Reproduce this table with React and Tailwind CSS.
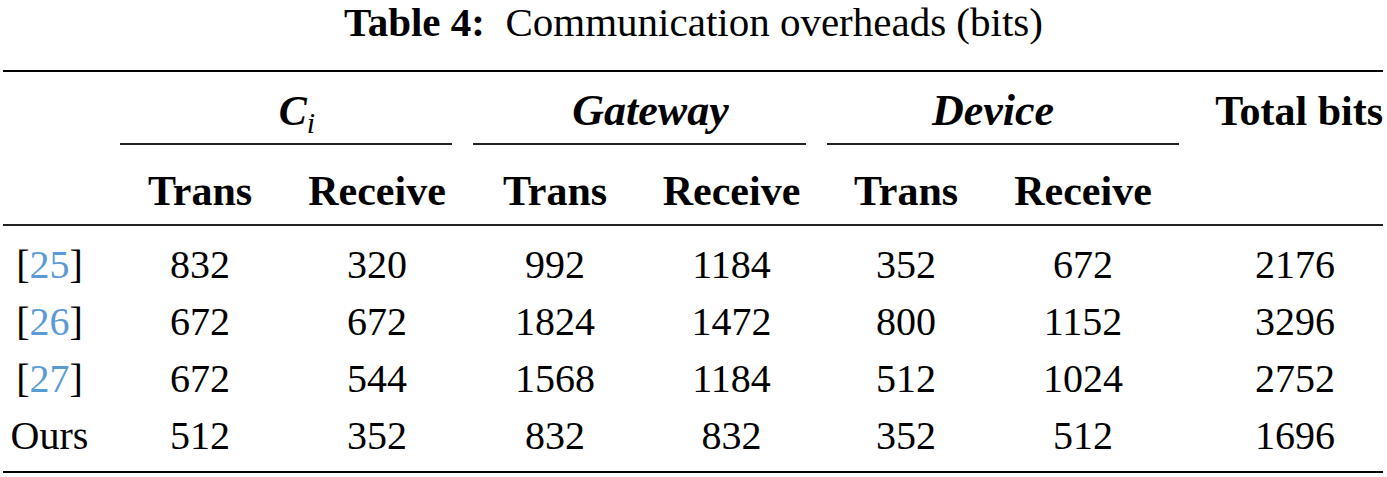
import React from "react";

const cols = "grid grid-cols-[106px_182px_172px_184px_169px_180px_174px_213px]";

const rows = [
  { ref: "25", v: ["832", "320", "992", "1184", "352", "672", "2176"] },
  { ref: "26", v: ["672", "672", "1824", "1472", "800", "1152", "3296"] },
  { ref: "27", v: ["672", "544", "1568", "1184", "512", "1024", "2752"] },
  { ref: null, v: ["512", "352", "832", "832", "352", "512", "1696"] },
];

export default function App() {
  return (
    <div className="w-[1387px] h-[477px] bg-white text-black font-['Liberation_Serif',serif] overflow-hidden">
      {/* caption */}
      <div className="h-[45px] text-center text-[41px] leading-[45px] whitespace-pre">
        <span className="font-bold">Table 4:</span>
        {"  "}Communication overheads (bits)
      </div>

      <div className="ml-[3px] w-[1380px] mt-[25px]">
        <div className="h-[2px] bg-black" />

        {/* group headers */}
        <div className={`${cols} h-[71px] pt-[15px] text-[42px] leading-[48px] font-bold`}>
          <div />
          <div className="col-span-2 text-center pl-[22px]">
            <span className="italic">C</span>
            <sub className="italic font-normal text-[30px]">i</sub>
          </div>
          <div className="col-span-2 text-center pl-[22px] italic text-[44px]">Gateway</div>
          <div className="col-span-2 text-center italic text-[44px]">Device</div>
          <div className="text-right">Total bits</div>
        </div>

        {/* cmidrules */}
        <div className={`${cols} h-[2px]`}>
          <div />
          <div className="col-span-2 mx-[11px] bg-[#222]" />
          <div className="col-span-2 mx-[10px] bg-[#222]" />
          <div className="col-span-2 ml-[11px] w-[352px] bg-[#222]" />
          <div />
        </div>

        {/* sub headers */}
        <div className={`${cols} h-[79px] pt-[22px] text-[42px] leading-[48px] font-bold text-center`}>
          <div />
          <div>Trans</div>
          <div>Receive</div>
          <div>Trans</div>
          <div>Receive</div>
          <div>Trans</div>
          <div>Receive</div>
          <div />
        </div>

        <div className="h-[2px] bg-[#222]" />

        {/* body */}
        <div className="pt-[10px] text-[40px] leading-[57px] text-center">
          {rows.map((r, i) => (
            <div key={i} className={`${cols} h-[57px]`}>
              <div className="pr-[13px]">
                {r.ref ? (
                  <>
                    [<span className="text-[#5b9bd5]">{r.ref}</span>]
                  </>
                ) : (
                  "Ours"
                )}
              </div>
              {r.v.slice(0, 6).map((n, j) => (
                <div key={j}>{n}</div>
              ))}
              <div className="pl-[37px]">{r.v[6]}</div>
            </div>
          ))}
        </div>

        <div className="mt-[7px] h-[2px] bg-black" />
      </div>
    </div>
  );
}
